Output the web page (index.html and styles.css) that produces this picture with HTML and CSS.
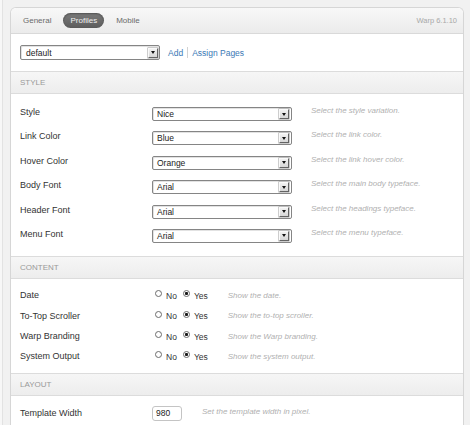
FILE: index.html
```html
<!DOCTYPE html>
<html>
<head>
<meta charset="utf-8">
<link rel="stylesheet" href="styles.css">
</head>
<body>
<div class="panel">
  <div class="topbar">
    <nav class="tabs">
      <span class="tab">General</span>
      <span class="tab active">Profiles</span>
      <span class="tab">Mobile</span>
    </nav>
    <span class="version">Warp 6.1.10</span>
  </div>

  <div class="profile-row">
    <div class="select select-profile"><span class="select-text">default</span><span class="arrow"></span></div>
    <a class="link">Add</a><span class="sep"></span><a class="link">Assign Pages</a>
  </div>

  <h3 class="section-title">Style</h3>
  <div class="section section-style">
    <div class="row row-select">
      <span class="label">Style</span>
      <div class="select"><span class="select-text">Nice</span><span class="arrow"></span></div>
      <span class="desc">Select the style variation.</span>
    </div>
    <div class="row row-select">
      <span class="label">Link Color</span>
      <div class="select"><span class="select-text">Blue</span><span class="arrow"></span></div>
      <span class="desc">Select the link color.</span>
    </div>
    <div class="row row-select">
      <span class="label">Hover Color</span>
      <div class="select"><span class="select-text">Orange</span><span class="arrow"></span></div>
      <span class="desc">Select the link hover color.</span>
    </div>
    <div class="row row-select">
      <span class="label">Body Font</span>
      <div class="select"><span class="select-text">Arial</span><span class="arrow"></span></div>
      <span class="desc">Select the main body typeface.</span>
    </div>
    <div class="row row-select">
      <span class="label">Header Font</span>
      <div class="select"><span class="select-text">Arial</span><span class="arrow"></span></div>
      <span class="desc">Select the headings typeface.</span>
    </div>
    <div class="row row-select">
      <span class="label">Menu Font</span>
      <div class="select"><span class="select-text">Arial</span><span class="arrow"></span></div>
      <span class="desc">Select the menu typeface.</span>
    </div>
  </div>

  <h3 class="section-title">Content</h3>
  <div class="section section-content">
    <div class="row row-radio">
      <span class="label">Date</span>
      <div class="radios"><span class="radio"></span><span class="opt">No</span><span class="radio checked"></span><span class="opt">Yes</span></div>
      <span class="desc">Show the date.</span>
    </div>
    <div class="row row-radio">
      <span class="label">To-Top Scroller</span>
      <div class="radios"><span class="radio"></span><span class="opt">No</span><span class="radio checked"></span><span class="opt">Yes</span></div>
      <span class="desc">Show the to-top scroller.</span>
    </div>
    <div class="row row-radio">
      <span class="label">Warp Branding</span>
      <div class="radios"><span class="radio"></span><span class="opt">No</span><span class="radio checked"></span><span class="opt">Yes</span></div>
      <span class="desc">Show the Warp branding.</span>
    </div>
    <div class="row row-radio">
      <span class="label">System Output</span>
      <div class="radios"><span class="radio"></span><span class="opt">No</span><span class="radio checked"></span><span class="opt">Yes</span></div>
      <span class="desc">Show the system output.</span>
    </div>
  </div>

  <h3 class="section-title">Layout</h3>
  <div class="section section-layout">
    <div class="row row-input">
      <span class="label">Template Width</span>
      <div class="input">980</div>
      <span class="desc">Set the template width in pixel.</span>
    </div>
  </div>
</div>
</body>
</html>
```

FILE: styles.css
```css
html {
  background: linear-gradient(90deg, #f7f7f7 0 2px, #e2e2e2 2px 3px, #f1f1f1 3px);
  height: 100%;
}
body {
  margin: 0;
  height: 425px;
  overflow: hidden;
  font-family: "Liberation Sans", Arial, sans-serif;
  color: #333;
}
.panel {
  margin: 7px 6px 0 10px;
  border: 1px solid #d6d6d6;
  border-bottom: none;
  border-radius: 6px 6px 0 0;
  background: #fff;
  padding-bottom: 40px;
}
.topbar {
  height: 25px;
  display: flex;
  align-items: center;
  justify-content: space-between;
  padding: 0 6px 0 5px;
  background: linear-gradient(#f8f8f8, #ebebeb);
  border-bottom: 1px solid #d9d9d9;
  border-radius: 5px 5px 0 0;
}
.tabs {
  display: flex;
  align-items: center;
  gap: 5px;
}
.tab {
  font-size: 8px;
  color: #6a6a6a;
  padding: 0 7px;
  height: 15px;
  line-height: 15px;
  border-radius: 8px;
}
.tab.active {
  background: linear-gradient(#7b7b7b, #5c5c5c);
  color: #f0f0f0;
  box-shadow: inset 0 1px 2px rgba(0, 0, 0, 0.35);
}
.version {
  font-size: 7.5px;
  color: #a8a8a8;
}
.profile-row {
  display: flex;
  align-items: center;
  padding: 11px 9px;
}
.select {
  box-sizing: border-box;
  width: 140px;
  height: 14px;
  display: flex;
  align-items: center;
  justify-content: space-between;
  border: 1px solid #858585;
  border-radius: 2px;
  background: #fff;
  padding: 0 2.5px 0 4px;
  box-shadow: inset 1px 1px 0 #e2e2e2;
}
.select-profile {
  height: 15px;
  padding-left: 5px;
  padding-right: 1px;
}
.select-text {
  font-size: 8.5px;
  color: #222;
  line-height: 10px;
}
.arrow {
  box-sizing: border-box;
  width: 10px;
  height: 10px;
  background: linear-gradient(#f2f2f2, #d6d6d6);
  border: 1px solid;
  border-color: #fafafa #646464 #646464 #fafafa;
  box-shadow: 0 0 0 0.5px #9a9a9a;
  display: flex;
  align-items: center;
  justify-content: center;
}
.arrow::after {
  content: "";
  border-left: 2.5px solid transparent;
  border-right: 2.5px solid transparent;
  border-top: 3px solid #111;
}
.link {
  font-size: 8.5px;
  color: #3a78b5;
}
.select + .link {
  margin-left: 8px;
}
.sep {
  width: 1px;
  height: 11px;
  background: #d2d2d2;
  margin: 0 4px;
}
.section-title {
  margin: 0;
  height: 21px;
  line-height: 21px;
  border-top: 1px solid #dcdcdc;
  border-bottom: 1px solid #dcdcdc;
  background: linear-gradient(#f6f6f6, #ededed);
  padding-left: 9px;
  font-size: 8px;
  font-weight: normal;
  color: #999;
  text-transform: uppercase;
}
.section-style {
  padding: 8px 0 7.5px;
}
.section-content {
  padding: 7px 0 5.8px;
}
.section-layout {
  padding: 5px 0 0;
}
.row {
  display: flex;
  padding-left: 9px;
}
.label {
  width: 132px;
  flex: none;
  font-size: 9px;
  line-height: 11px;
  color: #333;
}
.desc {
  font-size: 8px;
  line-height: 10px;
  font-style: italic;
  color: #b0b0b0;
}
.row-select {
  height: 24.4px;
  align-items: flex-start;
}
.row-select .label {
  margin-top: 5px;
}
.row-select .select {
  margin-top: 5px;
}
.row-select .desc {
  margin-top: 4px;
  margin-left: 19px;
}
.row-radio {
  height: 20.3px;
  align-items: center;
}
.radios {
  display: flex;
  align-items: center;
  padding-left: 3px;
}
.radio {
  box-sizing: border-box;
  width: 7px;
  height: 7px;
  border: 1px solid #6c6c6c;
  border-radius: 50%;
  background: #fff;
  margin-bottom: 4px;
}
.radio.checked {
  background: radial-gradient(circle, #1a1a1a 0 1.3px, #fff 1.8px);
}
.opt {
  font-size: 8.5px;
  color: #333;
  margin: 0 6px 0 4px;
}
.opt:last-child {
  margin-right: 0;
}
.row-radio .desc {
  margin-left: 20px;
}
.row-input {
  height: 24px;
  align-items: flex-start;
}
.row-input .label {
  margin-top: 7px;
}
.input {
  box-sizing: border-box;
  width: 30px;
  height: 15px;
  margin-top: 5px;
  border: 1px solid #c4c4c4;
  border-radius: 3px;
  font-size: 8.5px;
  line-height: 13px;
  padding-left: 3px;
  color: #222;
}
.row-input .desc {
  margin-top: 5.7px;
  margin-left: 20px;
}
```
